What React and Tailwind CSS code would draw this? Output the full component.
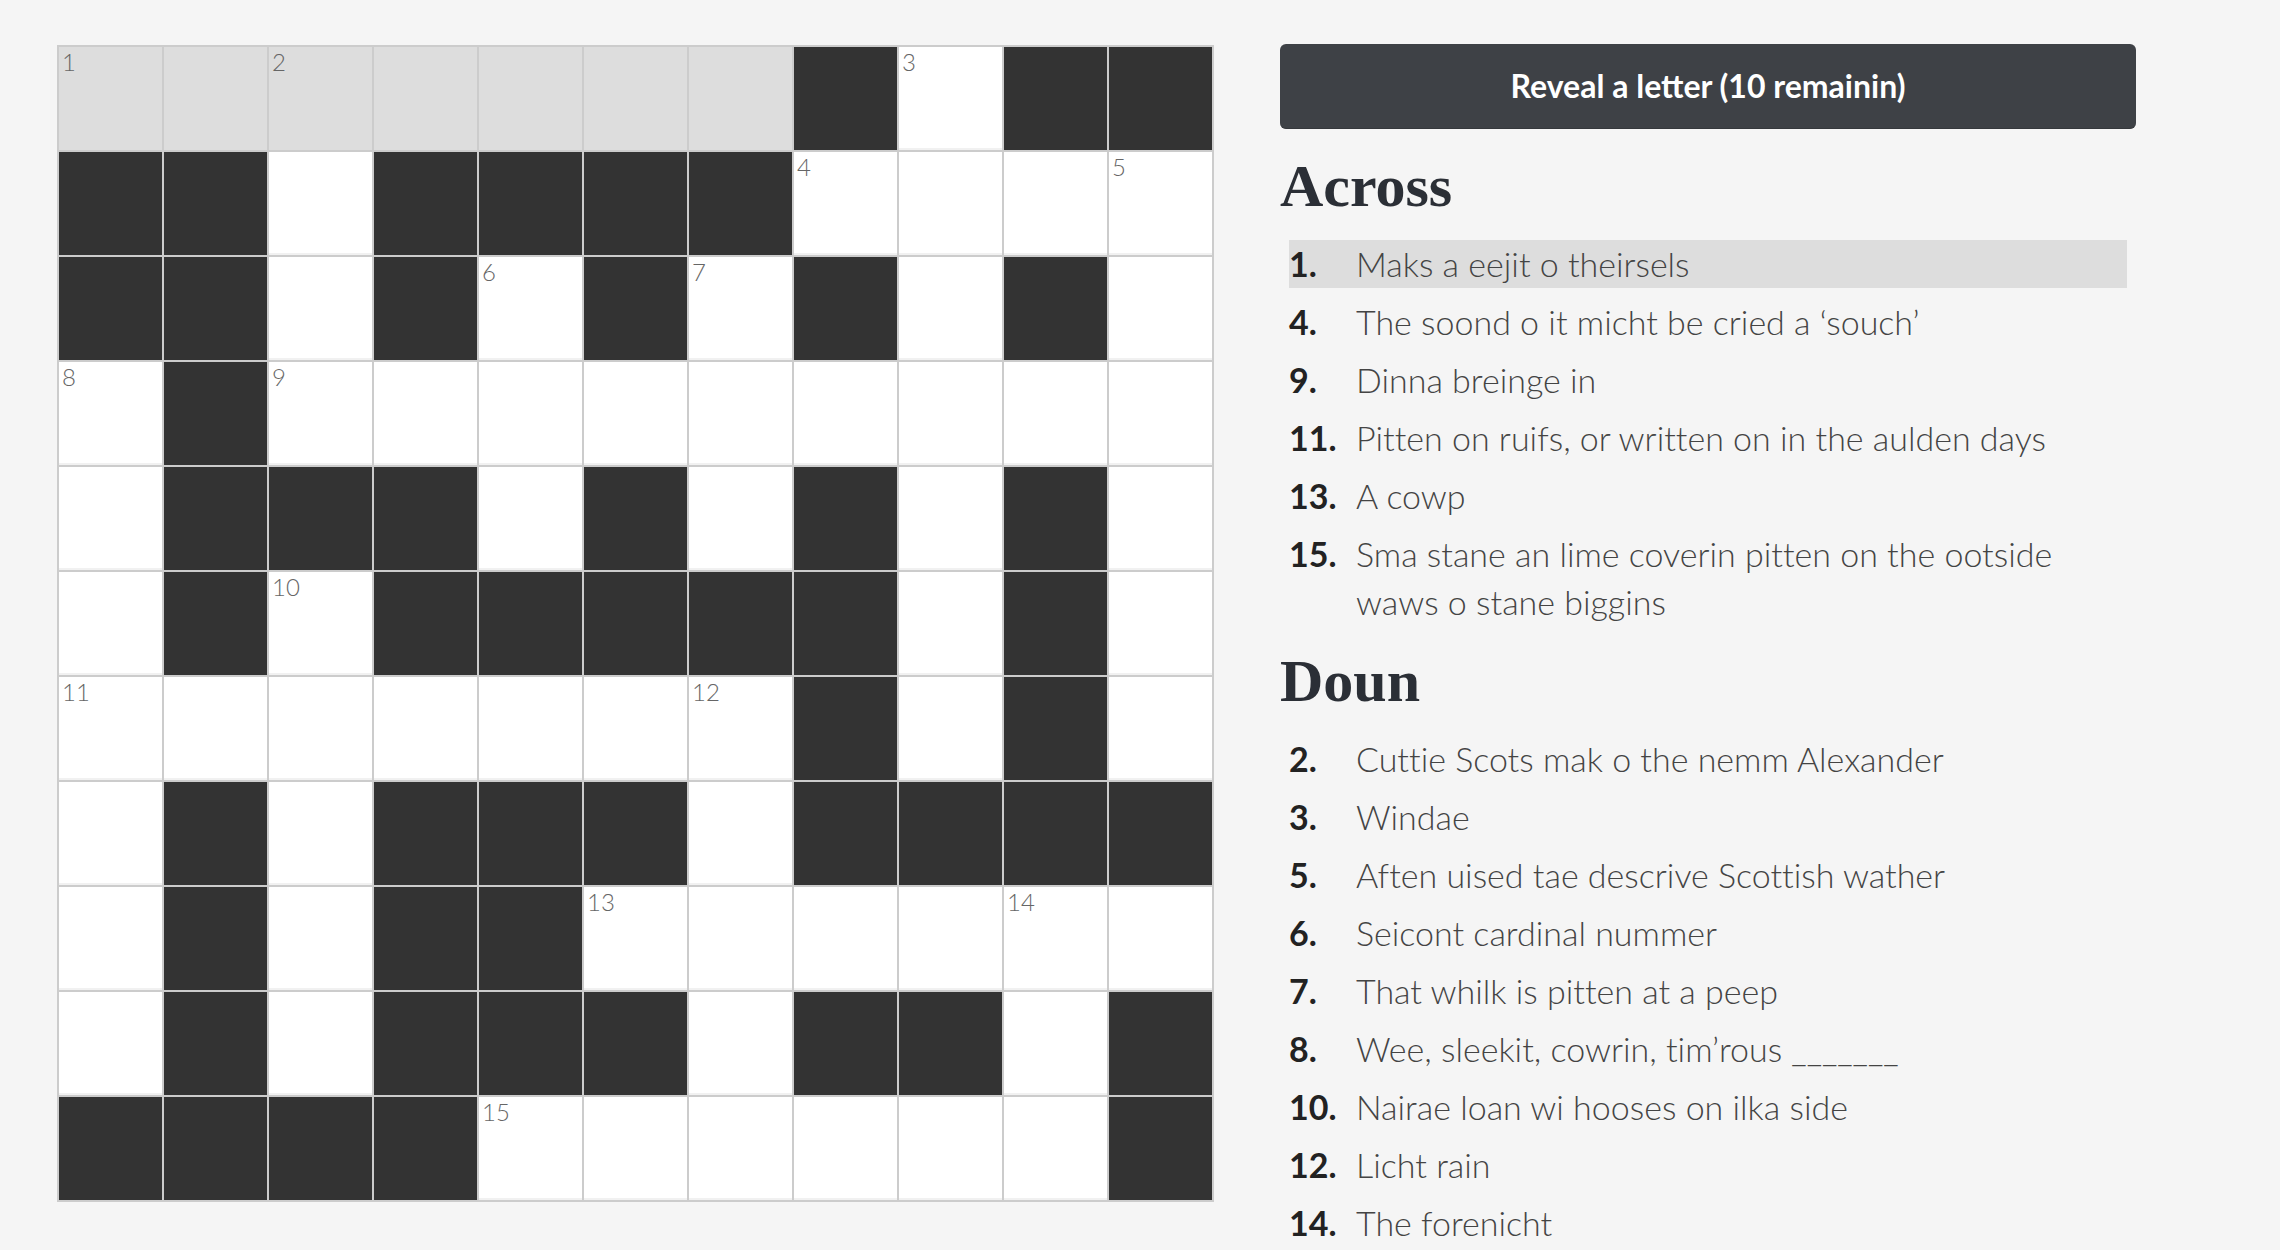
import React from 'react'

// H = highlighted (active word), W = open cell, B = block
const rows = [
  'HHHHHHHBWBB',
  'BBWBBBBWWWW',
  'BBWBWBWBWBW',
  'WBWWWWWWWWW',
  'WBBBWBWBWBW',
  'WBWBBBBBWBW',
  'WWWWWWWBWBW',
  'WBWBBBWBBBB',
  'WBWBBWWWWWW',
  'WBWBBBWBBWB',
  'BBBBWWWWWWB',
]

const numbers = {
  '0,0': 1, '0,2': 2, '0,8': 3, '1,7': 4, '1,10': 5, '2,4': 6, '2,6': 7,
  '3,0': 8, '3,2': 9, '5,2': 10, '6,0': 11, '6,6': 12, '8,5': 13, '8,9': 14, '10,4': 15,
}

const across = [
  { n: 1, text: 'Maks a eejit o theirsels', active: true },
  { n: 4, text: 'The soond o it micht be cried a ‘souch’' },
  { n: 9, text: 'Dinna breinge in' },
  { n: 11, text: 'Pitten on ruifs, or written on in the aulden days' },
  { n: 13, text: 'A cowp' },
  { n: 15, text: 'Sma stane an lime coverin pitten on the ootside waws o stane biggins' },
]

const doun = [
  { n: 2, text: 'Cuttie Scots mak o the nemm Alexander' },
  { n: 3, text: 'Windae' },
  { n: 5, text: 'Aften uised tae descrive Scottish wather' },
  { n: 6, text: 'Seicont cardinal nummer' },
  { n: 7, text: 'That whilk is pitten at a peep' },
  { n: 8, text: 'Wee, sleekit, cowrin, tim’rous _______' },
  { n: 10, text: 'Nairae loan wi hooses on ilka side' },
  { n: 12, text: 'Licht rain' },
  { n: 14, text: 'The forenicht' },
]

const light = { fontFamily: '"Lato Light", Lato, "Open Sans", sans-serif' }

const Cell = ({ type, num }) => {
  if (type === 'B') return <div className="w-[103px] h-[103px] bg-[#333333]" />
  return (
    <div
      className={`w-[103px] h-[103px] pl-[3px] pt-[1px] ${
        type === 'H' ? 'bg-[#dddddd]' : 'bg-white shadow-[inset_0_-2px_0_#f1f1f1]'
      }`}
    >
      {num && (
        <span className="block text-[24px] leading-[28px] font-light text-[#666666]" style={light}>
          {num}
        </span>
      )}
    </div>
  )
}

const ClueList = ({ clues }) => (
  <ol className="mx-[9px] flex flex-col gap-[10px]">
    {clues.map((c) => (
      <li
        key={c.n}
        className={`flex text-[34px] leading-[48px] [font-variant-ligatures:none] ${c.active ? 'bg-[#dddddd]' : ''}`}
      >
        <span className="w-[67px] shrink-0 font-bold text-[#222222]">{c.n}.</span>
        <span className="font-light text-[#444444]" style={light}>
          {c.text}
        </span>
      </li>
    ))}
  </ol>
)

export default function App() {
  return (
    <div
      className="min-h-screen bg-[#f5f5f5] flex items-start gap-[66px] pl-[57px] pt-[45px]"
      style={{ fontFamily: 'Lato, "Open Sans", sans-serif' }}
    >
      {/* Grid */}
      <div className="grid grid-cols-[repeat(11,103px)] gap-[2px] p-[2px] bg-[#cccccc] shrink-0">
        {rows.map((row, r) =>
          row.split('').map((t, c) => <Cell key={`${r}-${c}`} type={t} num={numbers[`${r},${c}`]} />)
        )}
      </div>

      {/* Clues */}
      <div className="w-[856px] -mt-[1px]">
        <button className="w-full h-[85px] rounded-[6px] bg-[#3e4146] border-b border-[#35383c] text-white text-[32px] font-bold">
          Reveal a letter (10 remainin)
        </button>

        <h2 className="mt-[27px] mb-[24px] text-[60px] leading-[60px] font-bold text-[#2b2f36] font-['Liberation_Serif',serif]">
          Across
        </h2>
        <ClueList clues={across} />

        <h2 className="mt-[25px] mb-[24px] text-[60px] leading-[60px] font-bold text-[#2b2f36] font-['Liberation_Serif',serif]">
          Doun
        </h2>
        <ClueList clues={doun} />
      </div>
    </div>
  )
}
